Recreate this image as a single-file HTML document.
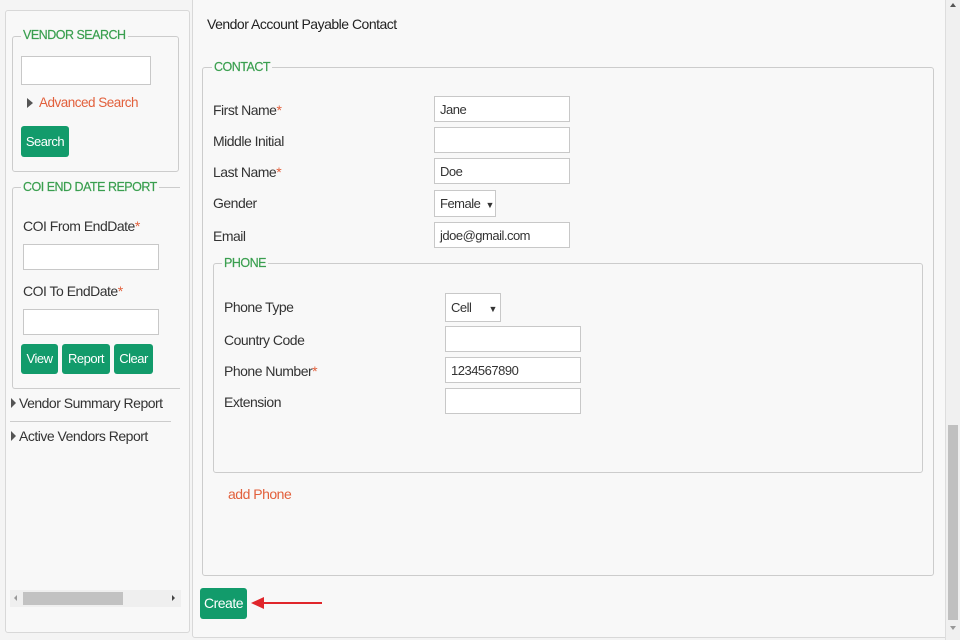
<!DOCTYPE html>
<html><head><meta charset="utf-8"><style>
*{box-sizing:border-box;margin:0;padding:0}
body{width:960px;height:640px;background:#f4f4f4;font-family:"Liberation Sans",sans-serif;font-size:13px;letter-spacing:-0.5px;color:#333;position:relative;overflow:hidden}
.a{position:absolute;white-space:nowrap}
.box{position:absolute;border:1px solid #d8d8d8;border-radius:3px}
.fs{position:absolute;border:1px solid #ccc;border-radius:3px}
.lg{position:absolute;color:#3a9f4f;font-size:12.5px;background:#f8f8f8;padding:0 2px;letter-spacing:-0.5px;white-space:nowrap;font-weight:500;-webkit-text-stroke:0.2px #3a9f4f}
.in{position:absolute;background:#fff;border:1px solid #c8c8c8;height:26px;padding:5px 5px;font-size:13px;color:#333;white-space:nowrap;overflow:hidden}
.btn{position:absolute;background:#129b6b;color:#fff;border-radius:3px;text-align:center;font-size:13px;line-height:28px;white-space:nowrap}
.st{color:#e2603c}
.tri{position:absolute;width:0;height:0;border-top:5px solid transparent;border-bottom:5px solid transparent;border-left:6px solid #555}
</style></head><body>
<div class="box" style="left:5px;top:10px;width:185px;height:623px;background:#f8f8f8"></div>
<div class="box" style="left:192px;top:-5px;width:754px;height:643px;background:#f8f8f8;border-radius:0 0 0 3px"></div>

<div class="fs" style="left:12px;top:36px;width:167px;height:136px"></div>
<div class="lg" style="left:21px;top:28px">VENDOR SEARCH</div>
<div class="in" style="left:21px;top:56px;width:130px;height:29px"></div>
<div class="tri" style="left:27px;top:98px"></div>
<div class="a st" style="left:39px;top:95px;font-size:13.5px">Advanced Search</div>
<div class="btn" style="left:21px;top:126px;width:48px;height:31px;line-height:31px">Search</div>

<div class="a" style="left:12px;top:187px;width:168px;height:202px;border-left:1px solid #ccc;border-top:1px solid #ccc;border-bottom:1px solid #ccc;border-radius:3px 0 0 3px"></div>
<div class="lg" style="left:21px;top:180px">COI END DATE REPORT</div>
<div class="a" style="left:23px;top:218px;font-size:14px">COI From EndDate<span class="st">*</span></div>
<div class="in" style="left:23px;top:244px;width:136px"></div>
<div class="a" style="left:23px;top:283px;font-size:14px">COI To EndDate<span class="st">*</span></div>
<div class="in" style="left:23px;top:309px;width:136px"></div>
<div class="btn" style="left:21px;top:344px;width:37px;height:30px;line-height:30px">View</div>
<div class="btn" style="left:62px;top:344px;width:48px;height:30px;line-height:30px">Report</div>
<div class="btn" style="left:114px;top:344px;width:39px;height:30px;line-height:30px">Clear</div>
<div class="tri" style="left:11px;top:398px;border-left-width:5px"></div>
<div class="a" style="left:19px;top:395px;font-size:14px">Vendor Summary Report</div>
<div class="a" style="left:10px;top:421px;width:161px;border-top:1px solid #ccc"></div>
<div class="tri" style="left:11px;top:431px;border-left-width:5px"></div>
<div class="a" style="left:19px;top:428px;font-size:14px">Active Vendors Report</div>
<div class="a" style="left:10px;top:590px;width:171px;height:17px;background:#efefef"></div>
<div class="a" style="left:23px;top:592px;width:100px;height:13px;background:#c2c2c2"></div>
<div class="a" style="left:14px;top:595px;border-top:3px solid transparent;border-bottom:3px solid transparent;border-right:3px solid #999"></div>
<div class="a" style="left:172px;top:595px;border-top:3px solid transparent;border-bottom:3px solid transparent;border-left:3px solid #444"></div>

<div class="a" style="left:207px;top:16px;font-size:14px;color:#222">Vendor Account Payable Contact</div>
<div class="fs" style="left:202px;top:67px;width:732px;height:509px"></div>
<div class="lg" style="left:212px;top:60px">CONTACT</div>
<div class="a" style="left:213px;top:102px;font-size:14px">First Name<span class="st">*</span></div>
<div class="a" style="left:213px;top:133px;font-size:14px">Middle Initial</div>
<div class="a" style="left:213px;top:164px;font-size:14px">Last Name<span class="st">*</span></div>
<div class="a" style="left:213px;top:195px;font-size:14px">Gender</div>
<div class="a" style="left:213px;top:228px;font-size:14px">Email</div>
<div class="in" style="left:434px;top:96px;width:136px">Jane</div>
<div class="in" style="left:434px;top:127px;width:136px"></div>
<div class="in" style="left:434px;top:158px;width:136px">Doe</div>
<div class="in" style="left:434px;top:190px;width:62px;height:27px">Female <span style="font-size:9px;margin-left:2px">▼</span></div>
<div class="in" style="left:434px;top:222px;width:136px">jdoe@gmail.com</div>

<div class="fs" style="left:213px;top:263px;width:710px;height:210px"></div>
<div class="lg" style="left:222px;top:256px">PHONE</div>
<div class="a" style="left:224px;top:299px;font-size:14px">Phone Type</div>
<div class="a" style="left:224px;top:332px;font-size:14px">Country Code</div>
<div class="a" style="left:224px;top:363px;font-size:14px">Phone Number<span class="st">*</span></div>
<div class="a" style="left:224px;top:394px;font-size:14px">Extension</div>
<div class="in" style="left:445px;top:293px;width:56px;height:29px;padding-top:6px">Cell <span style="font-size:9px;margin-left:14px">▼</span></div>
<div class="in" style="left:445px;top:326px;width:136px"></div>
<div class="in" style="left:445px;top:357px;width:136px">1234567890</div>
<div class="in" style="left:445px;top:388px;width:136px"></div>
<div class="a st" style="left:228px;top:486px;font-size:14px">add Phone</div>

<div class="btn" style="left:200px;top:588px;width:47px;height:31px;line-height:31px;font-size:14px">Create</div>
<div class="a" style="left:262px;top:602px;width:60px;height:2px;background:#e0262b"></div>
<div class="a" style="left:251px;top:597px;border-top:6px solid transparent;border-bottom:6px solid transparent;border-right:13px solid #e0262b"></div>

<div class="a" style="left:945px;top:0;width:15px;height:640px;background:#f0f0f0;border-left:1px solid #ddd"></div>
<div class="a" style="left:948px;top:425px;width:10px;height:195px;background:#c0c0c0"></div>
<div class="a" style="left:950px;top:3px;border-left:3px solid transparent;border-right:3px solid transparent;border-bottom:4px solid #555"></div>
<div class="a" style="left:950px;top:626px;border-left:3px solid transparent;border-right:3px solid transparent;border-top:4px solid #999"></div>
</body></html>
